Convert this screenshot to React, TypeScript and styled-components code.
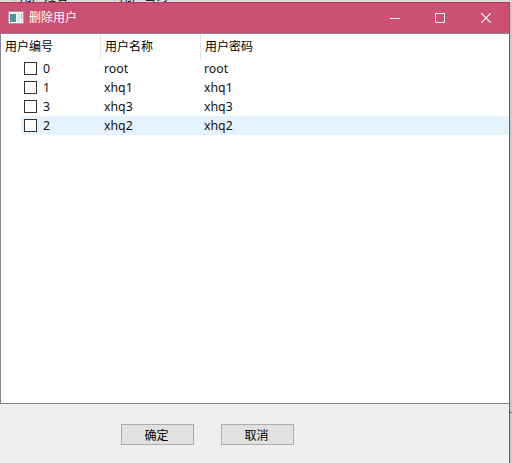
import React from 'react';
import styled, { createGlobalStyle } from 'styled-components';

const GlobalStyle = createGlobalStyle`
  * { box-sizing: border-box; }
  body {
    margin: 0;
    overflow: hidden;
    font-family: "Noto Sans", "Noto Sans CJK SC", sans-serif;
    font-size: 12px;
    color: #000;
  }
`;

const Desktop = styled.div`
  width: 512px;
  height: 463px;
  display: grid;
  grid-template: 2px 1fr / 510px 2px;
  background: #cbc9ca;
  overflow: hidden;
`;

const BackStrip = styled.div`
  grid-column: 1 / 3;
  display: flex;
  align-items: flex-end;
  height: 2px;
  padding-left: 14px;
  overflow: hidden;
  background: #dbd9da;
`;

const BackHeader = styled.div`
  flex: 0 0 100px;
  height: 15px;
  padding-left: 5px;
  border-left: 1px solid #bdbbbc;
  font-family: "Noto Sans CJK SC", sans-serif;
  line-height: 17px;
`;

const BackEdge = styled.div`
  padding-top: 410px;
`;

const BackLine = styled.div`
  height: 1px;
  background: #66676b;
`;

const Window = styled.div`
  display: flex;
  flex-direction: column;
  border-top: 1px solid #c43360;
  border-right: 1px solid #b63760;
  background: #efefef;
  min-width: 0;
`;

const TitleBar = styled.div`
  display: flex;
  align-items: center;
  height: 30px;
  padding-left: 8px;
  background: #cb5073;
  color: #fff;
`;

const Title = styled.span`
  flex: 1;
  margin-left: 5px;
  padding-bottom: 2px;
  font-family: "Noto Sans CJK SC", sans-serif;
  line-height: 18px;
`;

const CaptionButton = styled.button<{ $width?: number }>`
  display: flex;
  align-items: center;
  justify-content: center;
  width: ${(p) => p.$width ?? 45}px;
  height: 30px;
  padding: 0;
  border: 0;
  background: transparent;
`;

const List = styled.div`
  height: 371px;
  border: solid #83848f;
  border-width: 1px 0 1px 1px;
  background: #fff;
`;

const HeaderRow = styled.div`
  display: flex;
  height: 25px;
`;

const HeaderCell = styled.div`
  width: 100px;
  padding: 0 0 0 4px;
  border-right: 1px solid #e5e5e5;
  font-family: "Noto Sans CJK SC", sans-serif;
  line-height: 23px;

  &:last-child { border-right: 0; }
`;

const Row = styled.div<{ $active?: boolean }>`
  display: flex;
  align-items: center;
  height: 19px;
  margin-left: 20px;
  padding-left: 3px;
  background: ${(p) => (p.$active ? '#e5f3ff' : 'transparent')};
`;

const Checkbox = styled.span`
  width: 13px;
  height: 13px;
  margin-right: 6px;
  border: 1px solid #333;
  background: #fff;
`;

const Cell = styled.span<{ $width: number }>`
  width: ${(p) => p.$width}px;
  font-size: 12.3px;
  line-height: 19px;
  color: #111;
`;

const Footer = styled.div`
  display: flex;
  gap: 27px;
  padding: 20px 0 0 121px;
`;

const PushButton = styled.button`
  width: 73px;
  height: 21px;
  padding: 1px 2px 0 0;
  border: 1px solid #adadad;
  background: #e1e1e1;
  color: #000;
  font: 12px/18px "Noto Sans CJK SC", sans-serif;
`;

const AppIcon = () => (
  <svg width="16" height="14" viewBox="0 0 16 14" shapeRendering="crispEdges">
    <defs>
      <linearGradient id="pane" x1="0" y1="0" x2="1" y2="1">
        <stop offset="0" stopColor="#4a86b8" />
        <stop offset="1" stopColor="#4fa67c" />
      </linearGradient>
    </defs>
    <rect x="0" y="0" width="16" height="13" fill="#a59a9d" />
    <rect x="1" y="1" width="14" height="11" fill="#f1f3f2" />
    <rect x="2" y="3" width="6" height="8" fill="url(#pane)" />
    <rect x="9" y="3" width="3" height="8" fill="#dfe2e0" />
    <rect x="13" y="3" width="1" height="4" fill="#8fc0b4" />
    <rect x="13" y="7" width="1" height="4" fill="#dbe4df" />
    <rect x="0" y="13" width="16" height="1" fill="#b75472" />
  </svg>
);

const CaptionIcon = ({ kind }: { kind: 'min' | 'max' | 'close' }) => (
  <svg width="10" height="10" viewBox="0 0 10 10" fill="none" stroke="#fff">
    {kind === 'min' && <path d="M0 5.5H10" />}
    {kind === 'max' && <path d="M.5 .5H9.5V9.5H.5Z" />}
    {kind === 'close' && <path d="M.3 .3L9.7 9.7M9.7 .3L.3 9.7" strokeWidth="1.2" />}
  </svg>
);

const users = [
  { id: '0', name: 'root', password: 'root' },
  { id: '1', name: 'xhq1', password: 'xhq1' },
  { id: '3', name: 'xhq3', password: 'xhq3' },
  { id: '2', name: 'xhq2', password: 'xhq2', active: true },
];

export default function App() {
  return (
    <>
      <GlobalStyle />
      <Desktop>
        <BackStrip>
          <BackHeader>用户姓名</BackHeader>
          <BackHeader>用户密码</BackHeader>
        </BackStrip>
        <Window>
          <TitleBar>
            <AppIcon />
            <Title>删除用户</Title>
            <CaptionButton $width={44} aria-label="最小化"><CaptionIcon kind="min" /></CaptionButton>
            <CaptionButton $width={46} aria-label="最大化"><CaptionIcon kind="max" /></CaptionButton>
            <CaptionButton $width={46} aria-label="关闭"><CaptionIcon kind="close" /></CaptionButton>
          </TitleBar>
          <List>
            <HeaderRow>
              <HeaderCell>用户编号</HeaderCell>
              <HeaderCell>用户名称</HeaderCell>
              <HeaderCell>用户密码</HeaderCell>
            </HeaderRow>
            {users.map((u) => (
              <Row key={u.id} $active={u.active}>
                <Checkbox />
                <Cell $width={61}>{u.id}</Cell>
                <Cell $width={100}>{u.name}</Cell>
                <Cell $width={100}>{u.password}</Cell>
              </Row>
            ))}
          </List>
          <Footer>
            <PushButton>确定</PushButton>
            <PushButton>取消</PushButton>
          </Footer>
        </Window>
        <BackEdge><BackLine /></BackEdge>
      </Desktop>
    </>
  );
}
